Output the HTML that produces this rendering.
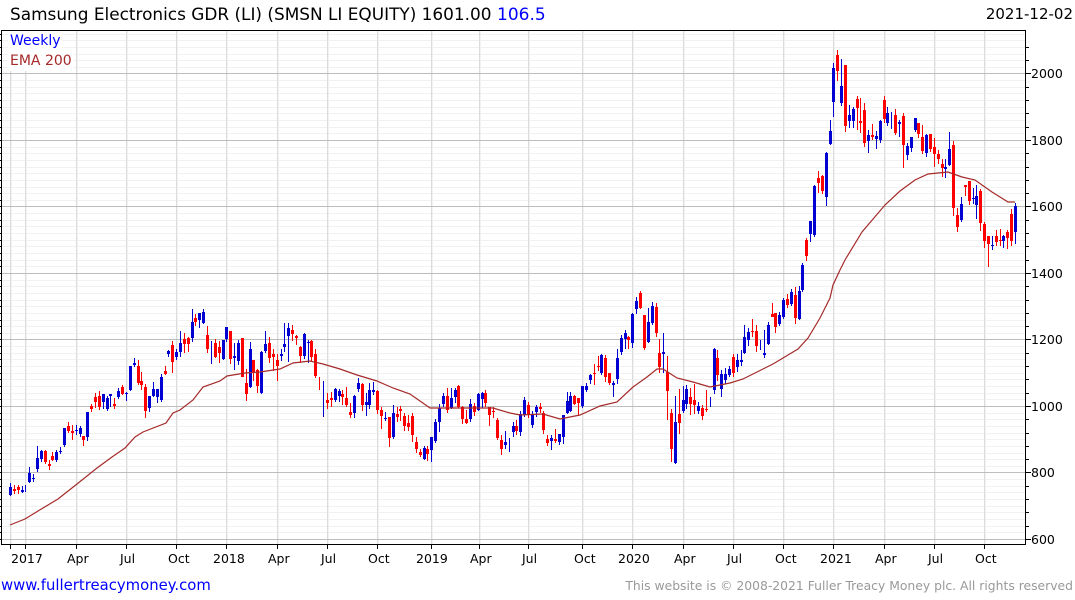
<!DOCTYPE html>
<html><head><meta charset="utf-8"><title>Samsung Electronics GDR</title>
<style>
html,body{margin:0;padding:0;background:#fff;width:1075px;height:600px;overflow:hidden}
svg{display:block;font-family:"DejaVu Sans",sans-serif}
</style></head><body>
<svg width="1075" height="600" viewBox="0 0 1075 600" xmlns="http://www.w3.org/2000/svg">
<g shape-rendering="crispEdges" fill="none">
<path id="mn" stroke="#f1f1f1" d="M2 532.5H1025M2 526.5H1025M2 519.5H1025M2 512.5H1025M2 506.5H1025M2 499.5H1025M2 492.5H1025M2 486.5H1025M2 479.5H1025M2 466.5H1025M2 459.5H1025M2 453.5H1025M2 446.5H1025M2 439.5H1025M2 433.5H1025M2 426.5H1025M2 419.5H1025M2 413.5H1025M2 399.5H1025M2 393.5H1025M2 386.5H1025M2 379.5H1025M2 373.5H1025M2 366.5H1025M2 359.5H1025M2 353.5H1025M2 346.5H1025M2 333.5H1025M2 326.5H1025M2 320.5H1025M2 313.5H1025M2 306.5H1025M2 300.5H1025M2 293.5H1025M2 286.5H1025M2 280.5H1025M2 266.5H1025M2 260.5H1025M2 253.5H1025M2 246.5H1025M2 240.5H1025M2 233.5H1025M2 226.5H1025M2 220.5H1025M2 213.5H1025M2 200.5H1025M2 193.5H1025M2 187.5H1025M2 180.5H1025M2 173.5H1025M2 167.5H1025M2 160.5H1025M2 153.5H1025M2 147.5H1025M2 133.5H1025M2 127.5H1025M2 120.5H1025M2 113.5H1025M2 107.5H1025M2 100.5H1025M2 93.5H1025M2 87.5H1025M2 80.5H1025M2 67.5H1025M2 60.5H1025M2 54.5H1025M2 47.5H1025M2 40.5H1025M2 34.5H1025"/>
<path stroke="#dcdcdc" d="M10.5 71V544M25.5 71V544M76.5 31V544M126.5 31V544M176.5 31V544M226.5 31V544M277.5 31V544M327.5 31V544M377.5 31V544M431.5 31V544M479.5 31V544M528.5 31V544M582.5 31V544M632.5 31V544M683.5 31V544M733.5 31V544M783.5 31V544M833.5 31V544M884.5 31V544M934.5 31V544M984.5 31V544"/>
<path stroke="#f2f2f2" d="M11.5 71V544M26.5 71V544M77.5 31V544M127.5 31V544M177.5 31V544M227.5 31V544M278.5 31V544M328.5 31V544M378.5 31V544M432.5 31V544M480.5 31V544M529.5 31V544M583.5 31V544M633.5 31V544M684.5 31V544M734.5 31V544M784.5 31V544M834.5 31V544M885.5 31V544M935.5 31V544M985.5 31V544"/>
<path stroke="#bdbdbd" d="M2 73.5H1025M2 140.5H1025M2 206.5H1025M2 273.5H1025M2 339.5H1025M2 406.5H1025M2 472.5H1025M2 539.5H1025"/>
<path stroke="#000" d="M1.5 30.5H1025.5V544.5H1.5Z"/>
<path stroke="#000" d="M0 34.5H1M0 40.5H1M0 47.5H1M0 54.5H1M0 60.5H1M0 67.5H1M0 73.5H1M0 80.5H1M0 87.5H1M0 93.5H1M0 100.5H1M0 107.5H1M0 113.5H1M0 120.5H1M0 127.5H1M0 133.5H1M0 140.5H1M0 147.5H1M0 153.5H1M0 160.5H1M0 167.5H1M0 173.5H1M0 180.5H1M0 187.5H1M0 193.5H1M0 200.5H1M0 206.5H1M0 213.5H1M0 220.5H1M0 226.5H1M0 233.5H1M0 240.5H1M0 246.5H1M0 253.5H1M0 260.5H1M0 266.5H1M0 273.5H1M0 280.5H1M0 286.5H1M0 293.5H1M0 300.5H1M0 306.5H1M0 313.5H1M0 320.5H1M0 326.5H1M0 333.5H1M0 339.5H1M0 346.5H1M0 353.5H1M0 359.5H1M0 366.5H1M0 373.5H1M0 379.5H1M0 386.5H1M0 393.5H1M0 399.5H1M0 406.5H1M0 413.5H1M0 419.5H1M0 426.5H1M0 433.5H1M0 439.5H1M0 446.5H1M0 453.5H1M0 459.5H1M0 466.5H1M0 472.5H1M0 479.5H1M0 486.5H1M0 492.5H1M0 499.5H1M0 506.5H1M0 512.5H1M0 519.5H1M0 526.5H1M0 532.5H1M0 539.5H1"/>
<path stroke="#000" d="M1026 47.5H1029M1026 60.5H1029M1026 73.5H1031M1026 87.5H1029M1026 100.5H1029M1026 113.5H1029M1026 127.5H1029M1026 140.5H1031M1026 153.5H1029M1026 167.5H1029M1026 180.5H1029M1026 193.5H1029M1026 206.5H1031M1026 220.5H1029M1026 233.5H1029M1026 246.5H1029M1026 260.5H1029M1026 273.5H1031M1026 286.5H1029M1026 300.5H1029M1026 313.5H1029M1026 326.5H1029M1026 339.5H1031M1026 353.5H1029M1026 366.5H1029M1026 379.5H1029M1026 393.5H1029M1026 406.5H1031M1026 419.5H1029M1026 433.5H1029M1026 446.5H1029M1026 459.5H1029M1026 472.5H1031M1026 486.5H1029M1026 499.5H1029M1026 512.5H1029M1026 526.5H1029M1026 539.5H1031"/>
<path stroke="#000" d="M10.5 545V549M25.5 545V549M76.5 545V549M126.5 545V549M176.5 545V549M226.5 545V549M277.5 545V549M327.5 545V549M377.5 545V549M431.5 545V549M479.5 545V549M528.5 545V549M582.5 545V549M632.5 545V549M683.5 545V549M733.5 545V549M783.5 545V549M833.5 545V549M884.5 545V549M934.5 545V549M984.5 545V549"/>

<path stroke="#0000d0" stroke-width="1" d="M10.5 483V496M22.5 486V493M25.5 485V492M29.5 467V483M33.5 474V482M37.5 446V472M41.5 450V462M56.5 450V462M60.5 447V454M64.5 428V447M76.5 425V435M80.5 426V437M87.5 412V441M103.5 394V409M107.5 396V411M110.5 394V407M118.5 388V399M126.5 392V401M130.5 366V391M134.5 358V367M149.5 396V412M153.5 382V397M157.5 389V403M161.5 374V402M168.5 350V357M176.5 349V360M180.5 331V357M192.5 309V342M199.5 313V328M203.5 309V324M211.5 341V364M223.5 340V360M226.5 327V342M234.5 343V370M238.5 340V365M250.5 342V388M261.5 351V394M265.5 331V353M281.5 349V361M284.5 323V352M288.5 323V362M304.5 333V359M308.5 340V363M323.5 381V417M335.5 388V402M339.5 389V402M354.5 395V418M358.5 378V392M366.5 393V416M369.5 383V409M373.5 382V395M385.5 412V421M393.5 405V439M424.5 446V460M431.5 437V462M435.5 419V443M439.5 404V432M443.5 393V407M451.5 388V409M455.5 388V403M470.5 399V422M478.5 393V411M482.5 392V408M505.5 431V449M509.5 438V452M513.5 422V437M520.5 411V436M524.5 397V417M532.5 411V428M536.5 405V417M551.5 435V450M559.5 434V445M563.5 415V444M567.5 392V414M570.5 392V412M582.5 386V408M586.5 383V392M590.5 374V384M601.5 354V375M613.5 381V397M617.5 349V384M621.5 335V355M625.5 330V349M632.5 313V348M636.5 297V314M648.5 308V343M652.5 302V325M663.5 333V373M675.5 396V464M683.5 386V413M686.5 385V409M698.5 402V414M710.5 397V407M714.5 348V394M721.5 370V397M725.5 368V384M729.5 366V377M737.5 354V372M741.5 350V366M744.5 325V354M748.5 328V346M760.5 340V350M764.5 330V358M768.5 322V345M779.5 312V326M783.5 298V319M791.5 289V306M799.5 286V320M802.5 263V292M810.5 221V242M814.5 185V237M826.5 152V206M830.5 120V145M833.5 63V117M841.5 59V106M849.5 105V128M853.5 107V128M868.5 130V153M876.5 131V149M880.5 120V143M887.5 107V126M891.5 112V129M899.5 120V137M907.5 143V160M911.5 137V152M915.5 118V132M926.5 134V157M945.5 159V178M949.5 132V166M961.5 197V222M973.5 188V204M976.5 185V219M992.5 236V250M1003.5 235V248M1015.5 203V244"/>
<path stroke="#0000d0" stroke-width="3" d="M10.5 487V495M22.5 490V492M29.5 473V482M33.5 478V479M37.5 458V469M41.5 451V459M56.5 452V460M60.5 451V452M64.5 428V445M76.5 430V431M80.5 428V434M87.5 412V437M103.5 394V402M107.5 398V409M110.5 394V396M118.5 391V397M126.5 393V394M130.5 366V390M134.5 363V365M149.5 396V408M153.5 389V396M157.5 389V397M161.5 377V400M168.5 351V354M176.5 352V357M180.5 343V352M192.5 322V338M199.5 313V320M203.5 312V323M223.5 340V359M226.5 327V339M234.5 356V358M238.5 343V361M250.5 349V387M261.5 352V393M265.5 344V351M281.5 354V356M284.5 344V347M288.5 328V336M304.5 334V356M308.5 342V343M335.5 389V400M339.5 391V396M354.5 396V413M358.5 383V389M366.5 402V405M369.5 390V405M373.5 390V392M385.5 418V419M393.5 413V437M424.5 448V459M431.5 437V450M435.5 422V441M439.5 408V422M443.5 396V404M451.5 398V408M455.5 390V397M470.5 404V419M478.5 394V410M482.5 393V399M505.5 442V445M513.5 426V432M520.5 414V432M524.5 400V415M532.5 415V425M536.5 407V412M551.5 438V441M559.5 434V442M563.5 415V437M567.5 401V413M570.5 396V411M582.5 386V406M586.5 386V390M590.5 375V380M601.5 355V373M613.5 383V385M617.5 358V379M621.5 338V352M625.5 333V339M632.5 314V343M636.5 301V309M648.5 322V342M652.5 306V323M663.5 352V354M675.5 422V463M683.5 400V411M686.5 389V404M698.5 406V411M714.5 349V390M721.5 374V389M725.5 374V380M729.5 369V375M737.5 360V367M741.5 360V362M744.5 337V353M748.5 332V340M764.5 353V355M768.5 325V344M779.5 315V324M783.5 300V317M791.5 292V304M799.5 291V319M802.5 265V290M810.5 221V234M814.5 186V235M826.5 153V197M830.5 131V144M833.5 68V102M841.5 86V103M849.5 115V121M853.5 109V121M868.5 135V141M876.5 136V139M880.5 121V140M887.5 113V123M899.5 122V124M907.5 146V155M911.5 137V148M915.5 118V130M926.5 135V153M945.5 167V169M949.5 149V165M961.5 204V220M973.5 198V199M976.5 196V205M992.5 245V246M1003.5 236V241M1015.5 206V232"/>
<path stroke="#f00" stroke-width="1" d="M14.5 485V494M18.5 485V494M45.5 450V464M49.5 460V470M52.5 452V461M68.5 422V433M72.5 425V440M83.5 436V446M91.5 404V412M95.5 393V408M99.5 391V410M114.5 398V409M122.5 385V395M138.5 360V385M141.5 372V390M145.5 384V418M165.5 366V375M172.5 341V373M184.5 333V353M188.5 337V352M195.5 314V326M207.5 326V353M215.5 339V358M219.5 341V363M230.5 331V364M242.5 338V377M246.5 369V401M253.5 360V381M257.5 369V393M269.5 337V363M273.5 349V371M277.5 354V381M292.5 325V341M296.5 335V345M300.5 346V363M311.5 340V361M315.5 349V378M319.5 377V390M327.5 393V409M331.5 392V407M342.5 390V405M346.5 387V407M350.5 403V418M362.5 383V411M377.5 390V414M381.5 407V429M389.5 417V447M397.5 407V422M400.5 406V421M404.5 413V431M408.5 415V431M412.5 413V442M416.5 437V453M420.5 449V457M427.5 446V461M447.5 388V413M458.5 385V408M462.5 406V424M466.5 410V424M474.5 403V416M485.5 390V407M489.5 407V426M493.5 407V418M497.5 418V440M501.5 435V455M516.5 420V435M528.5 402V418M540.5 403V413M543.5 411V434M547.5 435V446M555.5 429V443M574.5 395V405M578.5 398V415M594.5 364V385M598.5 356V371M605.5 355V382M609.5 373V385M628.5 336V349M640.5 291V309M644.5 315V350M656.5 303V337M659.5 339V373M667.5 356V420M671.5 409V462M679.5 389V434M690.5 388V415M694.5 384V414M702.5 405V420M706.5 390V412M717.5 350V381M733.5 354V377M752.5 319V337M756.5 325V352M772.5 303V317M775.5 313V333M787.5 294V308M795.5 287V324M806.5 238V261M818.5 171V193M822.5 175V194M837.5 50V81M845.5 65V132M857.5 96V130M860.5 98V133M864.5 103V147M872.5 124V140M884.5 96V123M895.5 109V135M903.5 113V168M918.5 123V138M922.5 125V154M930.5 134V152M934.5 138V167M938.5 150V164M942.5 159V177M953.5 141V216M957.5 208V232M965.5 185V196M969.5 181V205M980.5 189V231M984.5 222V248M988.5 236V267M996.5 230V246M1000.5 229V246M1007.5 230V249M1011.5 209V246"/>
<path stroke="#f00" stroke-width="3" d="M14.5 489V491M18.5 487V490M45.5 451V462M49.5 464V466M52.5 456V460M68.5 426V431M72.5 431V433M83.5 436V440M91.5 406V409M95.5 397V402M99.5 396V407M114.5 404V406M122.5 387V394M138.5 366V383M141.5 381V385M145.5 387V411M165.5 371V374M172.5 345V362M184.5 339V344M188.5 338V344M195.5 318V322M207.5 335V349M215.5 343V357M219.5 347V353M230.5 331V359M242.5 338V377M246.5 383V394M253.5 360V373M257.5 370V386M269.5 343V358M273.5 354V357M277.5 360V366M292.5 330V334M296.5 336V338M300.5 347V356M311.5 341V357M315.5 354V376M327.5 400V403M331.5 398V400M342.5 394V397M346.5 398V405M350.5 412V415M362.5 384V405M377.5 391V410M381.5 410V416M389.5 417V438M397.5 414V417M400.5 409V411M404.5 416V426M408.5 423V427M412.5 416V435M416.5 442V449M420.5 452V455M427.5 449V454M447.5 396V410M458.5 386V407M462.5 407V419M466.5 419V423M474.5 406V412M485.5 393V403M489.5 407V415M493.5 411V412M497.5 420V438M501.5 440V449M516.5 426V431M528.5 405V414M540.5 407V409M543.5 413V430M547.5 439V443M555.5 439V441M574.5 396V404M578.5 398V403M594.5 373V374M598.5 366V367M605.5 358V377M609.5 373V383M628.5 337V340M640.5 293V308M644.5 315V348M656.5 307V333M659.5 353V367M667.5 372V391M671.5 413V449M679.5 414V423M690.5 397V404M694.5 400V405M702.5 408V416M706.5 409V410M717.5 358V375M733.5 357V373M752.5 331V332M756.5 331V346M772.5 314V317M775.5 313V327M787.5 299V305M795.5 295V318M806.5 240V256M818.5 178V183M822.5 176V191M837.5 55V71M845.5 65V126M857.5 99V108M860.5 121V123M864.5 110V143M872.5 135V137M884.5 100V119M895.5 115V133M903.5 116V145M918.5 123V134M922.5 137V151M930.5 134V149M934.5 147V154M938.5 154V159M942.5 164V168M953.5 145V208M957.5 215V227M965.5 185V187M969.5 181V201M980.5 191V223M984.5 224V241M988.5 236V244M996.5 236V242M1000.5 240V241M1007.5 232V238M1011.5 214V241"/>
</g>
<polyline fill="none" stroke="#a52a2a" stroke-width="1.2" points="10,525 25,519 43,508 58,499 77,484 97,468 112,457 125,448 135,437 143,432 166,423 173,413 180,410 193,400 203,387 220,381 227,376 245,373 260,372 280,369 293,363 310,361 323,364 340,369 357,375 377,381 393,388 410,394 430,408 447,408 463,408 493,408 510,413 520,415 543,414 560,419 580,415 600,406 617,402 633,387 647,377 657,369 663,369 677,378 693,382 710,387 730,383 743,379 757,372 773,364 783,358 798,349 808,338 820,318 830,298 833,285 840,270 845,260 862,232 885,205 900,191 915,180 928,174 948,172 962,177 975,180 992,192 1008,202 1015,202"/>
<rect x="8" y="32" width="54" height="16" fill="#fff"/>
<rect x="8" y="52" width="66" height="18" fill="#fff"/>
<g font-size="14">
<text x="10" y="45" fill="#0000ff">Weekly</text>
<text x="10" y="65" fill="#a52a2a">EMA 200</text>
</g>
<text x="10" y="20" font-size="16.9" fill="#000">Samsung Electronics GDR (LI) (SMSN LI EQUITY) 1601.00</text>
<text x="497" y="20" font-size="17" fill="#0000ff">106.5</text>
<text x="1073" y="19" font-size="15" text-anchor="end" fill="#000">2021-12-02</text>
<g font-size="12.5" fill="#000">
<text x="1031" y="78">2000</text><text x="1031" y="145">1800</text><text x="1031" y="211">1600</text><text x="1031" y="278">1400</text><text x="1031" y="344">1200</text><text x="1031" y="411">1000</text><text x="1031" y="477">800</text><text x="1031" y="544">600</text>
</g>
<g font-size="12.5" fill="#000">
<text x="11" y="563">2017</text><text x="67" y="563">Apr</text><text x="120" y="563">Jul</text><text x="168" y="563">Oct</text><text x="213" y="563">2018</text><text x="268" y="563">Apr</text><text x="321" y="563">Jul</text><text x="368" y="563">Oct</text><text x="416" y="563">2019</text><text x="470" y="563">Apr</text><text x="522" y="563">Jul</text><text x="574" y="563">Oct</text><text x="618" y="563">2020</text><text x="674" y="563">Apr</text><text x="727" y="563">Jul</text><text x="775" y="563">Oct</text><text x="820" y="563">2021</text><text x="875" y="563">Apr</text><text x="928" y="563">Jul</text><text x="975" y="563">Oct</text>
</g>
<text x="1" y="590" font-size="14.85" fill="#0000ff">www.fullertreacymoney.com</text>
<text x="1073" y="590" font-size="12.36" text-anchor="end" fill="#999">This website is © 2008-2021 Fuller Treacy Money plc. All rights reserved</text>
</svg>
</body></html>
